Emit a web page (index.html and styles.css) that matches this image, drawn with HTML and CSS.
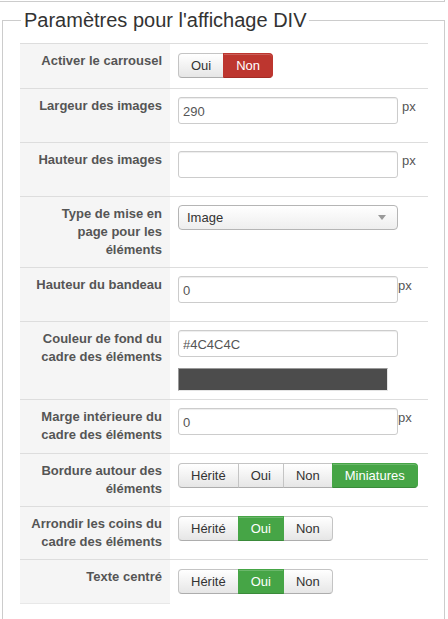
FILE: index.html
```html
<!DOCTYPE html>
<html lang="fr">
<head>
<meta charset="utf-8">
<title>Paramètres pour l'affichage DIV</title>
<link rel="stylesheet" href="styles.css">
</head>
<body>
<div class="prev-panel"></div>
<fieldset class="panel">
  <legend>Paramètres pour l'affichage DIV</legend>
  <div class="form">
    <div class="row">
      <div class="label">Activer le carrousel</div>
      <div class="ctrl">
        <div class="btn-group">
          <span class="btn">Oui</span><span class="btn btn-danger">Non</span>
        </div>
      </div>
    </div>
    <div class="row">
      <div class="label">Largeur des images</div>
      <div class="ctrl">
        <div class="field-line"><input class="field" type="text" value="290"><span class="unit spaced">px</span></div>
      </div>
    </div>
    <div class="row">
      <div class="label">Hauteur des images</div>
      <div class="ctrl">
        <div class="field-line"><input class="field" type="text" value=""><span class="unit spaced">px</span></div>
      </div>
    </div>
    <div class="row">
      <div class="label">Type de mise en page pour les éléments</div>
      <div class="ctrl">
        <div class="select"><span>Image</span><i class="caret"></i></div>
      </div>
    </div>
    <div class="row">
      <div class="label">Hauteur du bandeau</div>
      <div class="ctrl">
        <div class="field-line"><input class="field" type="text" value="0"><span class="unit">px</span></div>
      </div>
    </div>
    <div class="row">
      <div class="label">Couleur de fond du cadre des éléments</div>
      <div class="ctrl">
        <div class="field-line"><input class="field" type="text" value="#4C4C4C"></div>
        <div class="swatch" style="background:#4c4c4c"></div>
      </div>
    </div>
    <div class="row">
      <div class="label">Marge intérieure du cadre des éléments</div>
      <div class="ctrl">
        <div class="field-line"><input class="field" type="text" value="0"><span class="unit">px</span></div>
      </div>
    </div>
    <div class="row">
      <div class="label">Bordure autour des éléments</div>
      <div class="ctrl">
        <div class="btn-group">
          <span class="btn">Hérité</span><span class="btn">Oui</span><span class="btn">Non</span><span class="btn btn-success">Miniatures</span>
        </div>
      </div>
    </div>
    <div class="row">
      <div class="label">Arrondir les coins du cadre des éléments</div>
      <div class="ctrl">
        <div class="btn-group">
          <span class="btn">Hérité</span><span class="btn btn-success">Oui</span><span class="btn">Non</span>
        </div>
      </div>
    </div>
    <div class="row">
      <div class="label">Texte centré</div>
      <div class="ctrl">
        <div class="btn-group">
          <span class="btn">Hérité</span><span class="btn btn-success">Oui</span><span class="btn">Non</span>
        </div>
      </div>
    </div>
  </div>
</fieldset>
</body>
</html>
```

FILE: styles.css
```css
html, body {
  margin: 0;
  padding: 0;
  background: #fff;
  overflow: hidden;
}

body {
  font-family: "Liberation Sans", Arial, sans-serif;
  font-size: 13px;
  line-height: 18px;
  color: #333;
}

/* bottom edge of the panel above */
.prev-panel {
  width: 445px;
  height: 2px;
  box-sizing: border-box;
  border-bottom: 1px solid #ccc;
  border-right: 1px solid #ccc;
}

.panel {
  box-sizing: border-box;
  width: 443px;
  margin: 3px 0 0 2px;
  padding: 0 16px 30px 17px;
  border: 1px solid #ccc;
  min-width: 0;
}

.panel legend {
  margin-left: 1px;
  padding: 0 3px;
  font-size: 20px;
  line-height: 30px;
  color: #333;
}

.form {
  margin-top: 8px;
}

.row {
  display: grid;
  grid-template-columns: 150px 1fr;
  border-top: 1px solid #ddd;
}

.row:last-child .label {
  border-bottom: 1px solid #e8e8e8;
}

.label {
  background: #f5f5f5;
  padding: 8px 8px 8px;
  text-align: right;
  font-weight: bold;
  font-size: 13px;
  line-height: 18px;
  color: #555;
}

.ctrl {
  padding: 8px 8px 10px;
}

/* toggle button groups */
.btn-group {
  display: flex;
  margin-top: 1px;
}

.btn {
  box-sizing: border-box;
  height: 25px;
  padding: 0 12px;
  line-height: 23px;
  font-size: 13px;
  color: #333;
  border: 1px solid #c4c4c4;
  border-bottom-color: #adadad;
  background: linear-gradient(#ffffff, #e6e6e6);
  box-shadow: inset 0 1px 0 rgba(255, 255, 255, 0.2);
}

.btn + .btn {
  margin-left: -1px;
}

.btn:first-child {
  border-radius: 4px 0 0 4px;
}

.btn:last-child {
  border-radius: 0 4px 4px 0;
}

.btn-danger {
  background: #bd362f;
  border-color: #bd362f;
  border-bottom-color: #a32c26;
  color: #fff;
  position: relative;
}

.btn-success {
  background: #46a546;
  border-color: #46a546;
  border-bottom-color: #3a8a3a;
  color: #fff;
  position: relative;
}

/* text inputs */
.field-line {
  display: flex;
  align-items: flex-start;
}

.field {
  box-sizing: border-box;
  width: 220px;
  height: 27px;
  margin: 0 0 8px;
  padding: 2px 4px 0;
  border: 1px solid #ccc;
  border-radius: 3px;
  box-shadow: inset 0 1px 1px rgba(0, 0, 0, 0.075);
  font-family: "Liberation Sans", Arial, sans-serif;
  font-size: 13px;
  color: #555;
  background: #fff;
  outline: none;
}

.unit {
  font-size: 13px;
  line-height: 18px;
  color: #555;
  margin-top: 1px;
}

.unit.spaced {
  margin-left: 4px;
}

/* dropdown */
.select {
  box-sizing: border-box;
  width: 220px;
  height: 25px;
  display: flex;
  align-items: center;
  justify-content: space-between;
  padding: 0 11px 0 8px;
  border: 1px solid #b5b5b5;
  border-radius: 4px;
  background: linear-gradient(#ffffff, #eeeeee);
  color: #333;
  font-size: 13px;
}

.caret {
  width: 0;
  height: 0;
  border-left: 4px solid transparent;
  border-right: 4px solid transparent;
  border-top: 5px solid #999;
}

/* colour preview */
.swatch {
  box-sizing: border-box;
  width: 210px;
  height: 23px;
  margin: 3px 0 -2px;
  border-top: 1px solid #999;
  border-left: 1px solid #999;
  border-right: 1px solid #e4e4e4;
  border-bottom: 1px solid #e4e4e4;
}
```
